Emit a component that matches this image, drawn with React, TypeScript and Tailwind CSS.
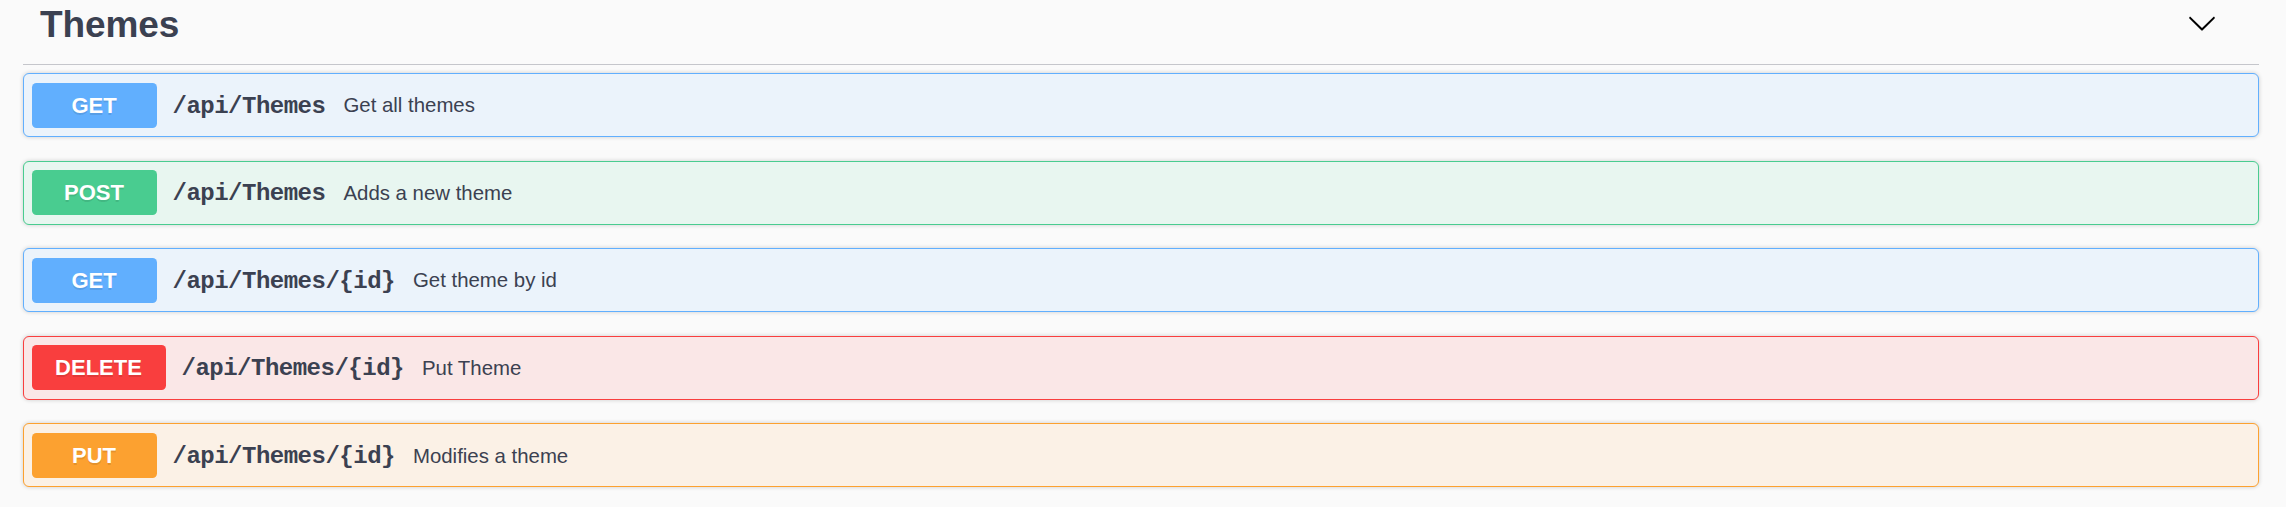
import React from "react";

type Op = {
  method: string;
  path: string;
  desc: string;
  badge: string;
  border: string;
  bg: string;
  w: string;
};

const ops: Op[] = [
  { method: "GET", path: "/api/Themes", desc: "Get all themes", badge: "bg-[#61affe]", border: "border-[#61affe]", bg: "bg-[#ebf3fb]", w: "w-[125px]" },
  { method: "POST", path: "/api/Themes", desc: "Adds a new theme", badge: "bg-[#49cc90]", border: "border-[#49cc90]", bg: "bg-[#e8f6f0]", w: "w-[125px]" },
  { method: "GET", path: "/api/Themes/{id}", desc: "Get theme by id", badge: "bg-[#61affe]", border: "border-[#61affe]", bg: "bg-[#ebf3fb]", w: "w-[125px]" },
  { method: "DELETE", path: "/api/Themes/{id}", desc: "Put Theme", badge: "bg-[#f93e3e]", border: "border-[#f93e3e]", bg: "bg-[#fae7e7]", w: "w-[134px]" },
  { method: "PUT", path: "/api/Themes/{id}", desc: "Modifies a theme", badge: "bg-[#fca130]", border: "border-[#fca130]", bg: "bg-[#fbf1e6]", w: "w-[125px]" },
];

export default function App() {
  return (
    <div className="min-h-[507px] w-[2286px] bg-[#fafafa] font-['Liberation_Sans',Arial,sans-serif] text-[#3b4151]">
      <div className="ml-[23px] w-[2236px]">
        <div className="flex h-[65px] items-start justify-between border-b-[1.5px] border-[#c5c6cb] pl-[17px] pr-[42px]">
          <h3 className="mt-[6px] text-[37px] font-bold leading-[37px] tracking-[-0.1px]">Themes</h3>
          <svg className="mt-[7.5px]" width="30" height="30" viewBox="0 0 20 20">
            <path
              fill="#000"
              d="M17.418 6.109c.272-.268.709-.268.979 0s.271.701 0 .969l-7.908 7.83c-.27.268-.707.268-.979 0l-7.908-7.83c-.27-.268-.27-.701 0-.969.271-.268.709-.268.979 0L10 13.25l7.418-7.141z"
            />
          </svg>
        </div>
        <div className="mt-[8px] flex flex-col gap-[23.6px]">
          {ops.map((op, i) => (
            <div
              key={i}
              className={`flex h-[64px] items-center rounded-[6px] border-[1.5px] ${op.border} ${op.bg} px-[7.5px] shadow-[0_0_4.5px_rgba(0,0,0,0.19)]`}
            >
              <div
                className={`flex h-[45px] ${op.w} shrink-0 items-center justify-center rounded-[4.5px] ${op.badge} text-[22px] font-bold text-white [text-shadow:0_1.5px_0_rgba(0,0,0,0.1)]`}
              >
                {op.method}
              </div>
              <span className="pl-[16px] pr-[18px] pt-[3px] font-['Liberation_Mono',monospace] text-[24px] font-bold tracking-[-0.5px]">
                {op.path}
              </span>
              <span className="pt-[1px] text-[20.4px]">{op.desc}</span>
            </div>
          ))}
        </div>
      </div>
    </div>
  );
}
